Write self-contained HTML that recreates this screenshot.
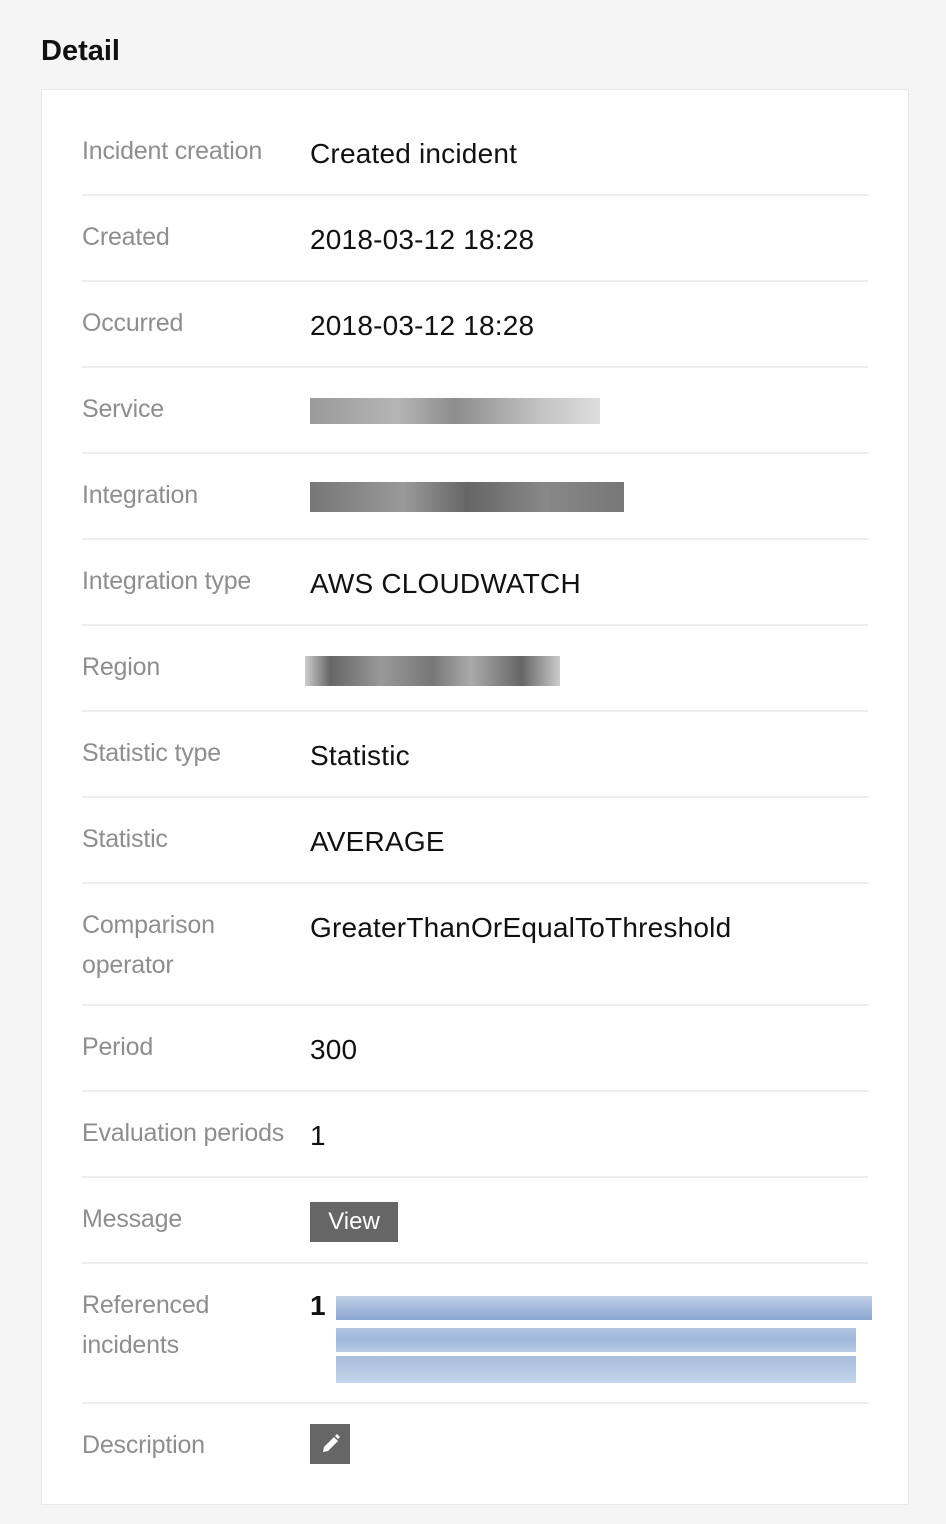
<!DOCTYPE html><html><head><style>
body{margin:0;width:946px;height:1524px;background:#f5f5f5;font-family:"Liberation Sans",sans-serif;position:relative;overflow:hidden}
h1{position:absolute;left:41px;top:33px;margin:0;font-size:29px;font-weight:bold;color:#111;line-height:36px}
.card{position:absolute;left:41px;top:89px;width:866px;height:1414px;background:#fff;border:1px solid #e8e8e8}
.l{position:absolute;left:82px;font-size:25px;color:#8e8e8e;line-height:40px;letter-spacing:-0.2px}
.v{position:absolute;left:310px;font-size:28px;color:#111;line-height:40px;letter-spacing:0.2px}
.s{position:absolute;left:82px;width:786px;height:2px;background:#ededed}
.b{position:absolute}
</style></head><body>
<h1>Detail</h1>
<div class="card"></div>
<div class="l" style="top:131px">Incident creation</div><div class="v" style="top:134px">Created incident</div>
<div class="s" style="top:194px"></div>
<div class="l" style="top:217px">Created</div><div class="v" style="top:220px">2018-03-12 18:28</div>
<div class="s" style="top:280px"></div>
<div class="l" style="top:303px">Occurred</div><div class="v" style="top:306px">2018-03-12 18:28</div>
<div class="s" style="top:366px"></div>
<div class="l" style="top:389px">Service</div>
<div class="b" style="left:310px;top:398px;width:290px;height:26px;background:linear-gradient(90deg,#9a9a9a,#b5b5b5 30%,#8d8d8d 50%,#c4c4c4 80%,#ddd)"></div>
<div class="s" style="top:452px"></div>
<div class="l" style="top:475px">Integration</div>
<div class="b" style="left:310px;top:482px;width:314px;height:30px;background:linear-gradient(90deg,#777,#999 30%,#666 50%,#888 75%,#777)"></div>
<div class="s" style="top:538px"></div>
<div class="l" style="top:561px">Integration type</div><div class="v" style="top:564px">AWS CLOUDWATCH</div>
<div class="s" style="top:624px"></div>
<div class="l" style="top:647px">Region</div>
<div class="b" style="left:305px;top:656px;width:255px;height:30px;background:linear-gradient(90deg,#ccc,#666 10%,#999 30%,#777 50%,#aaa 65%,#666 85%,#ccc)"></div>
<div class="s" style="top:710px"></div>
<div class="l" style="top:733px">Statistic type</div><div class="v" style="top:736px">Statistic</div>
<div class="s" style="top:796px"></div>
<div class="l" style="top:819px">Statistic</div><div class="v" style="top:822px">AVERAGE</div>
<div class="s" style="top:882px"></div>
<div class="l" style="top:905px">Comparison<br>operator</div><div class="v" style="top:908px">GreaterThanOrEqualToThreshold</div>
<div class="s" style="top:1004px"></div>
<div class="l" style="top:1027px">Period</div><div class="v" style="top:1030px">300</div>
<div class="s" style="top:1090px"></div>
<div class="l" style="top:1113px">Evaluation periods</div><div class="v" style="top:1116px">1</div>
<div class="s" style="top:1176px"></div>
<div class="l" style="top:1199px">Message</div>
<div class="b" style="left:310px;top:1202px;width:88px;height:40px;background:#666;color:#fff;font-size:24px;line-height:40px;text-align:center">View</div>
<div class="s" style="top:1262px"></div>
<div class="l" style="top:1285px">Referenced<br>incidents</div>
<div class="v" style="top:1286px;font-weight:bold">1</div>
<div class="b" style="left:336px;top:1296px;width:536px;height:24px;background:linear-gradient(180deg,#c2d1e6,#a4bbdc 50%,#8aa6d2)"></div>
<div class="b" style="left:336px;top:1328px;width:520px;height:24px;background:linear-gradient(180deg,#b3c6e1,#9db6da 50%,#bccde5)"></div>
<div class="b" style="left:336px;top:1356px;width:520px;height:27px;background:linear-gradient(180deg,#a8bedd,#b8cae4 60%,#c5d4ea)"></div>
<div class="s" style="top:1402px"></div>
<div class="l" style="top:1425px">Description</div>
<div class="b" style="left:310px;top:1424px;width:40px;height:40px;background:#666">
<svg width="40" height="40" viewBox="0 0 40 40"><path d="M13 28l1-5 10-10 4 4-10 10z M25 12l2-2 3 3-2 2z" fill="#fff"/></svg></div>
</body></html>
